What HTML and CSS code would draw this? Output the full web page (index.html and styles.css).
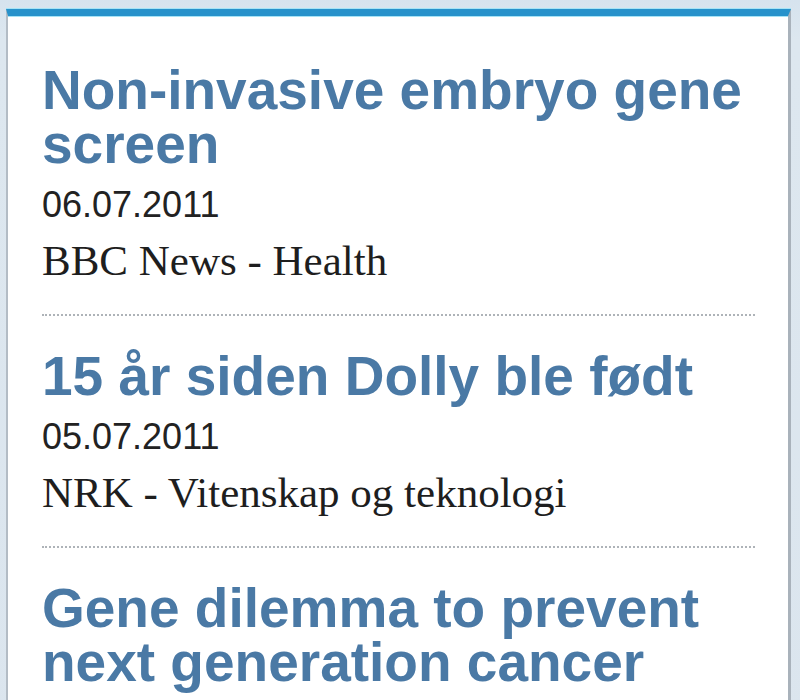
FILE: index.html
```html
<!DOCTYPE html>
<html>
<head>
<meta charset="utf-8">
<link rel="stylesheet" href="styles.css">
</head>
<body>
<div class="page">
  <div class="card">
    <ul class="news">
      <li class="item first">
        <a class="title" href="#">Non-invasive embryo gene screen</a>
        <div class="date">06.07.2011</div>
        <div class="source">BBC News - Health</div>
      </li>
      <li class="item">
        <a class="title" href="#">15 år siden Dolly ble født</a>
        <div class="date">05.07.2011</div>
        <div class="source">NRK - Vitenskap og teknologi</div>
      </li>
      <li class="item">
        <a class="title" href="#">Gene dilemma to prevent next generation cancer</a>
        <div class="date">05.07.2011</div>
        <div class="source">BBC News - Health</div>
      </li>
    </ul>
  </div>
</div>
</body>
</html>
```

FILE: styles.css
```css
html, body {
  margin: 0;
  padding: 0;
  height: 100%;
  overflow: hidden;
}
body {
  background: #dbe5ee;
}
.page {
  padding: 9px 9px 0 6px;
  background: linear-gradient(180deg, #d6e3ee 0, #dde7ef 40px, #dbe5ee 100%);
}
.card {
  background: #ffffff;
  border-top: 7px solid #2792cb;
  border-left: 2px solid #b3bcc5;
  border-right: 3px solid #a9b2bb;
  box-shadow: 0 -1px 0 #a6e3f6, inset 0 1px 0 #a6e3f6;
  min-height: 720px;
  padding: 47px 33px 0 34px;
}
.news {
  list-style: none;
  margin: 0;
  padding: 0;
}
.item {
  padding: 33px 0 27px 0;
  border-top: 2px dotted #aeb3b8;
}
.item.first {
  padding-top: 0;
  border-top: none;
}
.title {
  display: block;
  font-family: "Liberation Sans", Arial, sans-serif;
  font-weight: bold;
  font-size: 55px;
  line-height: 54px;
  color: #4a79a5;
  text-decoration: none;
}
.date {
  margin-top: 7px;
  font-family: "Liberation Sans", Arial, sans-serif;
  font-size: 36px;
  line-height: 54px;
  color: #222222;
}
.source {
  margin-top: 3px;
  font-family: "Liberation Serif", "Times New Roman", serif;
  font-size: 43px;
  line-height: 52px;
  color: #1e1e1e;
}
```
